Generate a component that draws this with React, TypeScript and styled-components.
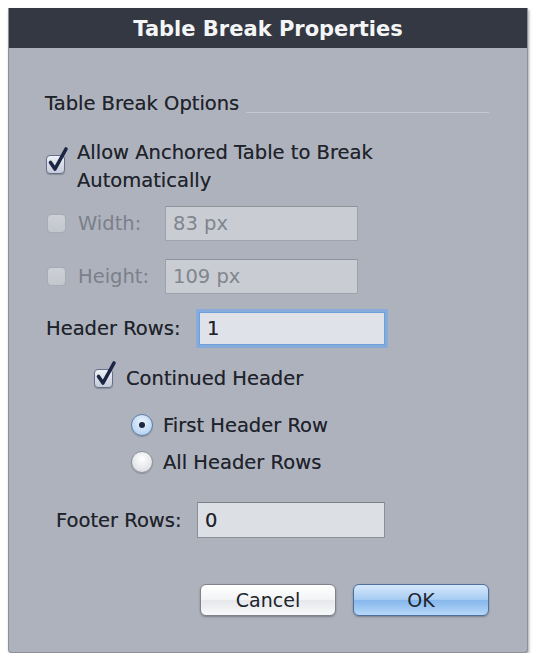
import React from "react";
import styled, { createGlobalStyle, css } from "styled-components";

const Global = createGlobalStyle`
  html, body { margin: 0; padding: 0; background: #ffffff; }
  body { font-family: "DejaVu Sans", "Liberation Sans", sans-serif; }
`;

const Dialog = styled.div`
  margin: 8px 0 0 8px;
  width: 520px;
  height: 645px;
  box-sizing: border-box;
  background: #adb2bd;
  border: 1px solid #8c9098;
  border-top: none;
  box-shadow: 1px 2px 3px rgba(0, 0, 0, 0.35);
  border-radius: 0 0 4px 4px;
  display: flex;
  flex-direction: column;
`;

const TitleBar = styled.div`
  height: 40px;
  background: #343843;
  color: #f4f5f7;
  font-weight: bold;
  font-size: 21px;
  display: flex;
  align-items: center;
  justify-content: center;
  padding-top: 1px;
  box-sizing: border-box;
`;

const Body = styled.div`
  padding: 0 38px 0 36px;
  display: flex;
  flex-direction: column;
  color: #1f232b;
  font-size: 19.5px;
  text-shadow: 0 0 0.6px rgba(31, 35, 43, 0.6);
`;

const SectionHeader = styled.div`
  margin-top: 43px;
  height: 24px;
  display: flex;
  align-items: center;
  gap: 7px;
`;

const Rule = styled.div`
  flex: 1;
  height: 1px;
  margin-top: 18px;
  background: #c3c7cf;
`;

const Row = styled.div<{ $mt: number; $h: number; $indent?: number }>`
  margin-top: ${(p) => p.$mt}px;
  height: ${(p) => p.$h}px;
  padding-left: ${(p) => p.$indent ?? 0}px;
  display: flex;
  align-items: center;
`;

const WrapRow = styled.div`
  margin-top: 24px;
  display: flex;
  align-items: flex-start;
  padding-left: 1px;
`;

const WrapText = styled.div`
  margin-left: 12px;
  line-height: 28px;
  width: 340px;
`;

const BoxSlot = styled.div`
  margin-top: 16px;
`;

const BoxWrap = styled.div<{ $disabled?: boolean }>`
  position: relative;
  width: 19px;
  height: 19px;
  flex: none;
  box-sizing: border-box;
  border-radius: 4px;
  border: 1px solid ${(p) => (p.$disabled ? "#a7abb3" : "#66708a")};
  background: ${(p) =>
    p.$disabled
      ? "linear-gradient(#cdd0d6, #c2c6cd)"
      : "linear-gradient(#eef1f7, #c4cbd9)"};
  box-shadow: ${(p) => (p.$disabled ? "none" : "0 1px 1px rgba(0,0,0,0.2)")};
`;

const CheckSvg = styled.svg`
  position: absolute;
  left: 1px;
  top: -9px;
  overflow: visible;
`;

const Checkbox = ({ checked, disabled }: { checked?: boolean; disabled?: boolean }) => (
  <BoxWrap $disabled={disabled}>
    {checked && (
      <CheckSvg width="22" height="26" viewBox="0 0 22 26">
        <path
          d="M2.5 15.5 L7 22 L18 2"
          fill="none"
          stroke="#1b2544"
          strokeWidth="3.6"
          strokeLinecap="round"
          strokeLinejoin="round"
        />
      </CheckSvg>
    )}
  </BoxWrap>
);

const RadioCircle = styled.div<{ $on?: boolean }>`
  width: 22px;
  height: 22px;
  flex: none;
  box-sizing: border-box;
  border-radius: 50%;
  border: 1px solid ${(p) => (p.$on ? "#5f7ea8" : "#8d929c")};
  background: ${(p) =>
    p.$on
      ? "radial-gradient(circle at 50% 35%, #e9f3fd, #a9cbee)"
      : "radial-gradient(circle at 50% 35%, #ffffff, #d3d6dc)"};
  box-shadow: 0 1px 1px rgba(0, 0, 0, 0.2);
  display: flex;
  align-items: center;
  justify-content: center;
`;

const Dot = styled.div`
  width: 6px;
  height: 6px;
  border-radius: 50%;
  background: #1d2640;
`;

const Label = styled.span<{ $disabled?: boolean; $w?: number; $ml?: number }>`
  color: ${(p) => (p.$disabled ? "#7b808a" : "#1f232b")};
  ${(p) => p.$disabled && css`text-shadow: none;`}
  ${(p) => p.$w !== undefined && css`width: ${p.$w}px; flex: none;`}
  margin-left: ${(p) => p.$ml ?? 0}px;
  white-space: nowrap;
`;

const Field = styled.div<{ $disabled?: boolean; $focus?: boolean; $w: number; $h: number }>`
  width: ${(p) => p.$w}px;
  height: ${(p) => p.$h}px;
  box-sizing: border-box;
  padding-left: 7px;
  display: flex;
  align-items: center;
  font-size: 19.5px;
  color: ${(p) => (p.$disabled ? "#80858e" : "#20242c")};
  ${(p) => p.$disabled && css`text-shadow: none;`}
  background: ${(p) => (p.$disabled ? "#c9ccd2" : "#dcdfe4")};
  border: 1px solid ${(p) => (p.$disabled ? "#9ea3ab" : "#8a8f98")};
  border-top-color: ${(p) => (p.$disabled ? "#8f949c" : "#7a7f88")};
  ${(p) =>
    p.$focus &&
    css`
      border: 1px solid #6f9fd8;
      box-shadow: 0 0 0 3px rgba(120, 170, 230, 0.75);
      background: #dfe3e9;
    `}
`;

const ButtonRow = styled.div`
  margin-top: 46px;
  display: flex;
  justify-content: flex-end;
  gap: 17px;
`;

const Button = styled.button<{ $primary?: boolean }>`
  width: 136px;
  height: 32px;
  border-radius: 6px;
  font-family: "DejaVu Sans", "Liberation Sans", sans-serif;
  font-size: 19px;
  color: #20242c;
  cursor: pointer;
  padding: 0;
  border: 1px solid ${(p) => (p.$primary ? "#4f6f9c" : "#7f838b")};
  background: ${(p) =>
    p.$primary
      ? "linear-gradient(#d6e8fb 0%, #a8cdf3 48%, #86b7ec 52%, #b7d8f8 100%)"
      : "linear-gradient(#ffffff 0%, #f3f4f6 48%, #e6e8eb 52%, #f7f8f9 100%)"};
  box-shadow: 0 1px 2px rgba(0, 0, 0, 0.3);
`;

export default function App() {
  return (
    <>
      <Global />
      <Dialog>
        <TitleBar>Table Break Properties</TitleBar>
        <Body>
          <SectionHeader>
            <span>Table Break Options</span>
            <Rule />
          </SectionHeader>

          <WrapRow>
            <BoxSlot>
              <Checkbox checked />
            </BoxSlot>
            <WrapText>Allow Anchored Table to Break Automatically</WrapText>
          </WrapRow>

          <Row $mt={11} $h={35} $indent={2}>
            <Checkbox disabled />
            <Label $disabled $ml={12} $w={87}>Width:</Label>
            <Field $disabled $w={193} $h={35}>83 px</Field>
          </Row>

          <Row $mt={18} $h={35} $indent={2}>
            <Checkbox disabled />
            <Label $disabled $ml={12} $w={87}>Height:</Label>
            <Field $disabled $w={193} $h={35}>109 px</Field>
          </Row>

          <Row $mt={16} $h={37} $indent={1}>
            <Label $w={153}>Header Rows:</Label>
            <Field $focus $w={186} $h={33}>1</Field>
          </Row>

          <Row $mt={18} $h={26} $indent={49}>
            <Checkbox checked />
            <Label $ml={13}>Continued Header</Label>
          </Row>

          <Row $mt={21} $h={26} $indent={86}>
            <RadioCircle $on>
              <Dot />
            </RadioCircle>
            <Label $ml={10}>First Header Row</Label>
          </Row>

          <Row $mt={11} $h={26} $indent={86}>
            <RadioCircle />
            <Label $ml={10}>All Header Rows</Label>
          </Row>

          <Row $mt={27} $h={36} $indent={11}>
            <Label $w={141}>Footer Rows:</Label>
            <Field $w={188} $h={36}>0</Field>
          </Row>

          <ButtonRow>
            <Button>Cancel</Button>
            <Button $primary>OK</Button>
          </ButtonRow>
        </Body>
      </Dialog>
    </>
  );
}
